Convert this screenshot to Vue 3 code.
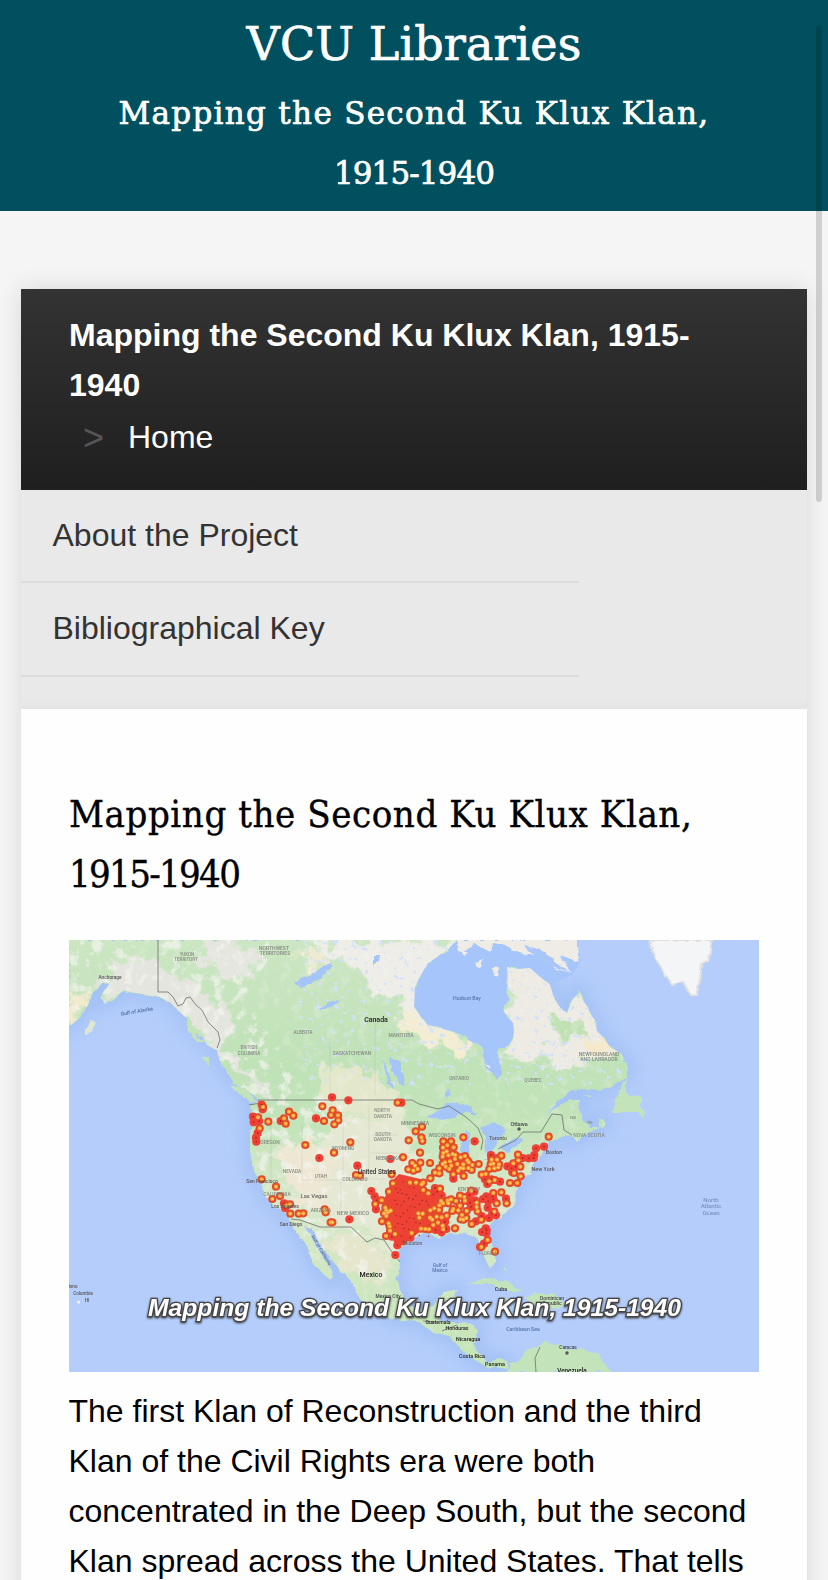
<script setup>
const place = (points, dx, dy) =>
  points.map(([x, y, hot]) => ({ x: x / 3 + dx, y: y / 3 + dy, hot: !!hot }))

// Chapter locations; a third value of 1 marks a solid red pin.
const pins = [
  ...place([
    [605, 524, 1], [608, 538, 1], [609, 531], [579, 560, 1], [594, 562], [581, 577, 1], [597, 574, 1], [599, 595], [593, 609, 1], [588, 623, 1], [589, 635, 1],
    [625, 575], [662, 573, 1], [672, 565], [677, 581], [687, 545], [700, 557]
  ], -9, -10),
  ...place([
    [96, 502, 1], [145, 511, 1], [293, 518], [304, 518, 1], [67, 529], [98, 541], [93, 555], [114, 556], [115, 571], [103, 583], [72, 573], [48, 565, 1],
    [16, 645], [151, 637], [366, 590], [347, 604], [364, 622], [367, 633], [326, 631], [490, 622], [524, 634, 1],
    [430, 634], [453, 634], [442, 646], [461, 652], [429, 653], [708, 655, 1]
  ], 231, -10),
  ...place([[26, 620], [12, 650, 1]], 471, -10),
  ...place([[605, 88], [648, 110], [660, 138], [637, 147], [672, 160, 1], [675, 174, 1], [690, 163], [679, 167], [691, 191], [716, 191]], -9, 210),
  ...place([
    [58, 24, 1], [102, 8], [172, 47, 1], [168, 75], [180, 77], [271, 27, 1], [309, 22], [360, 8], [10, 190], [74, 178], [77, 187], [92, 217], [97, 217], [148, 208, 1],
    [214, 123, 1], [224, 139, 1], [230, 151, 1], [226, 162], [228, 178, 1], [245, 151], [267, 125], [256, 173], [252, 190], [264, 187], [246, 214], [266, 220], [270, 242], [258, 258], [279, 100], [275, 73],
    [337, 39], [361, 38], [390, 39], [325, 58], [340, 62], [353, 57], [345, 47], [391, 85], [405, 68], [418, 55], [418, 70], [428, 42], [292, 286, 1], [286, 315, 1], [310, 274, 1], [331, 263, 1], [276, 260, 1],
    [430, 9], [445, 16], [458, 12], [465, 27], [450, 34], [435, 37], [472, 42], [482, 22], [495, 18], [502, 31], [490, 43], [505, 54], [490, 55], [475, 62], [460, 73], [460, 86, 1], [448, 57], [515, 60], [517, 45], [536, 42], [491, 78], [506, 37],
    [440, 4], [428, 20], [454, 47], [466, 15], [481, 54], [437, 50],
    [573, 15, 1], [604, 17], [575, 29], [591, 29], [572, 43], [583, 55], [568, 57], [595, 52], [545, 74], [557, 72], [555, 88, 1], [562, 102, 1], [574, 88, 1], [584, 90], [600, 95, 1], [568, 94], [597, 43], [580, 41],
    [654, 14], [668, 24, 1], [686, 25, 1], [703, 15, 1], [655, 31], [640, 40], [622, 49, 1], [635, 55, 1], [661, 50], [637, 67, 1], [642, 69], [662, 79], [630, 99], [652, 99], [647, 50, 1], [701, 24, 1],
    [514, 122], [523, 125, 1], [480, 137], [493, 141], [508, 135, 1], [495, 152], [510, 158, 1], [525, 151, 1], [513, 171, 1], [480, 167], [468, 153], [453, 148], [445, 160], [460, 177], [475, 181], [486, 195], [500, 183], [499, 204], [482, 208], [490, 209], [515, 222], [528, 214, 1], [544, 209], [533, 184], [530, 158], [545, 198, 1], [465, 235], [440, 197], [457, 183], [443, 152], [429, 160], [530, 171],
    [549, 147, 1], [559, 139, 1], [565, 154, 1], [578, 139, 1], [580, 129], [604, 127], [590, 160], [580, 148, 1], [563, 173, 1], [583, 185], [588, 196, 1], [567, 204, 1], [618, 146, 1], [620, 160], [577, 190, 1],
    [557, 235, 1], [546, 246, 1], [559, 250, 1], [563, 270], [552, 281, 1], [540, 291, 1], [544, 291], [585, 305], [560, 241, 1],
    [370, 98], [385, 130], [405, 114, 1], [412, 125, 1], [420, 116], [400, 133, 1], [425, 137, 1], [423, 153], [418, 166], [403, 175], [417, 180], [410, 200], [397, 209], [425, 202], [414, 218], [400, 225], [387, 238], [376, 237], [363, 236], [430, 238], [439, 237, 1], [425, 247, 1], [428, 227], [391, 181], [390, 203], [407, 240, 1], [435, 216, 1],
    [355, 190], [368, 191], [358, 203], [335, 249], [370, 120], [348, 98], [330, 98], [365, 103], [259, 198], [259, 181], [285, 252], [272, 182], [269, 229]
  ], 231, 210)
]

// Closely packed markers inside the southern cluster.
const packed = []
for (let r = 0; r < 10; r++) {
  for (let c = 0; c < 6; c++) {
    packed.push({ x: 325 + c * 6.3 + ((r * 7 + c * 3) % 5), y: 241 + r * 5.8 + ((c * 5 + r * 2) % 4) })
  }
}

const labels = [
  [41, 39, 'Anchorage', 4.8, '#555'], [118, 16, 'YUKON', 4.5], [117, 20.5, 'TERRITORY', 4.5],
  [205, 9.5, 'NORTHWEST', 5], [206, 14.5, 'TERRITORIES', 5], [180, 109, 'BRITISH', 4.5], [180, 114.5, 'COLUMBIA', 4.5],
  [234, 94, 'ALBERTA', 4.5], [283, 114.5, 'SASKATCHEWAN', 4.9], [332, 96.5, 'MANITOBA', 4.9], [390, 140, 'ONTARIO', 4.7], [464, 142, 'QUEBEC', 4.7],
  [307, 81.5, 'Canada', 7, '#222'], [398, 60, 'Hudson Bay', 5.2, '#5875ac'], [530, 116, 'NEWFOUNDLAND', 5.1], [530, 121.2, 'AND LABRADOR', 5.1],
  [504, 179, 'NB', 4.3], [521, 184, 'PE', 4.3], [520, 197, 'NOVA SCOTIA', 4.9], [450, 186, 'Ottawa', 5.4, '#444'], [429, 200, 'Toronto', 5.2, '#555'],
  [201, 203.5, 'OREGON', 4.9], [313, 172, 'NORTH', 4.7], [314, 177.5, 'DAKOTA', 4.7], [346, 184.5, 'MINNESOTA', 5], [314, 195.5, 'SOUTH', 4.7], [314, 200.5, 'DAKOTA', 4.7],
  [373, 196.5, 'WISCONSIN', 5], [274, 209.5, 'WYOMING', 4.8], [223, 233, 'NEVADA', 4.8], [252, 237.5, 'UTAH', 4.8], [286, 240.5, 'COLORADO', 4.9], [319, 220, 'NEBRASKA', 4.8],
  [308, 234, 'United States', 6.3, '#333'], [193, 243, 'San Francisco', 5, '#555'], [208, 256, 'CALIFORNIA', 4.8], [216, 268, 'Los Angeles', 5, '#555'], [245, 258, 'Las Vegas', 5.8, '#666'],
  [222, 286, 'San Diego', 5, '#555'], [252, 271.5, 'ARIZONA', 4.8], [284, 274.5, 'NEW MEXICO', 5.3], [344, 305, 'Houston', 4.8, '#666'], [302, 337, 'Mexico', 7, '#222'],
  [371, 327, 'Gulf of', 4.8, '#5875ac'], [371, 331.5, 'Mexico', 4.8, '#5875ac'], [419, 315, 'FLORIDA', 4.5], [432, 351, 'Cuba', 5.4, '#333'], [319, 358, 'Mexico City', 4.8, '#444'],
  [369, 384, 'Guatemala', 5.2, '#222'], [388, 390, 'Honduras', 5.3, '#222'], [399, 401, 'Nicaragua', 5.3, '#222'], [403, 417.5, 'Costa Rica', 5.4, '#222'], [426, 425.5, 'Panama', 5.4, '#222'],
  [454, 391, 'Caribbean Sea', 5.2, '#5875ac'], [483, 360, 'Dominican', 5, '#444'], [483, 365, 'Republic', 5, '#444'], [499, 409, 'Caracas', 4.8, '#444'], [503, 433, 'Venezuela', 6.4, '#222'],
  [485, 214, 'Boston', 5.2, '#555'], [474, 231, 'New York', 5.4, '#555'], [642, 261.5, 'North', 6, '#7a92be'], [642, 268, 'Atlantic', 6, '#7a92be'], [642, 274.5, 'Ocean', 6, '#7a92be'],
  [3, 348, 'Hono', 4.6, '#555'], [14, 354.5, 'Columbia', 4.6, '#555'], [18, 361.5, 'HI', 4.6, '#555'], [400, 251, 'KENTUCKY', 4.5]
]

const land =
  'M0 0H388L378 10 359 23 350 38 346 47 345 67 354 80 359 85 374 89 388 93 401 101 414 107 415 118 416 127 422 132 428 140 433 133 430 122 429 110 438 106 444 100 445 91 444 83 438 76 434 70 440 60 438 50 439 38 438 27 450 29 461 28 471 37 481 45 483 52 486 60 492 69 498 73 502 63 510 50 514 61 519 67 521 74 526 80 528 91 534 97 541 107 551 113 558 123 558 137 546 144 534 150 520 149 501 150 492 158 478 175 491 165 501 160 511 160 510 170 514 180 520 187 531 187 534 178 537 185 518 193 508 202 503 195 491 197 480 203 471 217 464 223 462 235 454 237 450 245 446 257 445 266 431 277 419 285 418 295 424 307 427 320 423 328 418 322 412 311 408 298 401 294 381 293 371 298 358 293 344 298 334 305 328 313 331 323 328 337 331 350 338 363 348 370 364 367 369 357 376 351 388 350 386 358 374 364 368 373 369 382 381 382 404 384 409 391 404 403 408 410 418 422 431 419 439 423 438 428 425 426 418 428 408 421 394 412 386 403 381 397 364 393 358 387 344 379 331 382 314 373 301 367 289 357 286 347 274 333 261 318 251 305 243 288 235 286 241 295 248 307 254 317 261 328 264 337 261 341 251 330 244 323 238 307 231 297 224 287 218 273 204 265 194 253 193 243 184 230 181 210 181 197 183 177 181 165 190 163 189 158 178 151 163 142 160 135 151 122 148 110 138 105 134 98 123 90 120 80 114 75 101 62 91 57 68 53 54 50 44 60 36 64 31 57 41 43 34 42 24 53 19 65 11 77 0 87Z'
</script>

<template>
  <div class="page">
    <header class="banner">
      <div class="library">VCU Libraries</div>
      <div class="collection">Mapping the Second Ku Klux Klan,<br /><span class="years">1915-1940</span></div>
    </header>
    <main class="sheet">
      <div class="crumbs">
        <strong>Mapping the Second Ku Klux Klan, 1915-<br />1940</strong>
        <div class="current"><span>&gt;</span>Home</div>
      </div>
      <nav>
        <a>About the Project</a>
        <a>Bibliographical Key</a>
      </nav>
      <article>
        <h1>Mapping the Second Ku Klux Klan,<br /><span class="years">1915-1940</span></h1>
        <svg class="map" viewBox="0 0 690 432" preserveAspectRatio="none" role="img">
          <defs>
            <linearGradient id="terrain" x1="0" y1="0" x2="0" y2="432" gradientUnits="userSpaceOnUse">
              <stop offset="0" stop-color="#cbe6c2" />
              <stop offset=".3" stop-color="#bfe2b7" />
              <stop offset=".44" stop-color="#c4e4ba" />
              <stop offset=".6" stop-color="#d9e8cb" />
              <stop offset="1" stop-color="#c3e5b5" />
            </linearGradient>
            <clipPath id="coast"><path :d="land" /></clipPath>
            <filter id="ragged" x="-20%" y="-20%" width="140%" height="140%">
              <feTurbulence type="fractalNoise" baseFrequency=".06" numOctaves="4" seed="8" result="n" />
              <feGaussianBlur in="SourceGraphic" stdDeviation="1.8" result="b" />
              <feDisplacementMap in="b" in2="n" scale="34" xChannelSelector="R" yChannelSelector="G" />
            </filter>
            <filter id="edge" x="-5%" y="-5%" width="110%" height="110%">
              <feTurbulence type="fractalNoise" baseFrequency=".12" numOctaves="3" seed="4" result="n" />
              <feDisplacementMap in="SourceGraphic" in2="n" scale="5" xChannelSelector="R" yChannelSelector="G" />
              <feGaussianBlur stdDeviation=".55" />
            </filter>
            <filter id="relief" x="0" y="0" width="100%" height="100%">
              <feTurbulence type="fractalNoise" baseFrequency=".09" numOctaves="4" seed="17" />
              <feColorMatrix values="0 0 0 0 .91  0 0 0 0 .91  0 0 0 0 .87  5 0 0 0 -2.6" />
              <feGaussianBlur stdDeviation=".5" />
            </filter>
            <filter id="lakes" x="0" y="0" width="100%" height="100%">
              <feTurbulence type="fractalNoise" baseFrequency=".17" numOctaves="2" seed="31" />
              <feColorMatrix values="0 0 0 0 .64  0 0 0 0 .75  0 0 0 0 .95  0 10 0 0 -6.4" />
            </filter>
            <filter id="glow" x="-10%" y="-10%" width="120%" height="120%"><feGaussianBlur stdDeviation="8" /></filter>
            <filter id="soft" x="-5%" y="-5%" width="110%" height="110%"><feGaussianBlur stdDeviation=".5" /></filter>
            <filter id="dark" x="-5%" y="-40%" width="110%" height="180%"><feGaussianBlur stdDeviation="1" /></filter>
            <clipPath id="mountains"><path d="M0 0H210L175 60 225 130 245 155 285 170 300 225 290 260 320 345 270 330 200 270 170 150 90 70H0Z" /></clipPath>
          </defs>
          <rect width="690" height="432" fill="#b4cdfb" />
          <path :d="land" fill="none" stroke="#a3c1f5" stroke-width="14" filter="url(#glow)" />
          <path d="M388 0H509L511 22 503 35 478 45 438 27 445 80 444 100 428 138 415 108 359 85 346 60 352 30Z" fill="#a6c5fa" />
          <g filter="url(#edge)">
            <path :d="land" fill="url(#terrain)" />
          </g>
          <g clip-path="url(#coast)">
            <g filter="url(#ragged)">
              <path d="M30 60L40 30 68 14 90 28 120 45 145 60 163 85 160 112 185 140 215 160 195 154 150 115 105 70 65 60Z" fill="#e5e5e0" />
              <path d="M125 0H185L195 28 165 40 140 28Z" fill="#e5e6df" />
              <path d="M235 0H400V75L380 94 350 85 328 62 308 60 293 32 265 20Z" fill="#efede8" />
              <path d="M438 15H490L500 70 512 45 550 110 525 122 490 128 475 116 455 125 428 112 444 88Z" fill="#edebe3" />
              <path d="M250 122L290 128 330 155 335 175H255Z" fill="#e4e8cb" />
              <path d="M255 178L335 175 350 205 345 290 320 315 290 285 250 288 255 240Z" fill="#e5e8d2" />
              <path d="M206 215L225 200 262 210 258 270 240 275 224 250Z" fill="#eee7d3" />
              <path d="M255 293L300 300 322 320 312 350 295 335 275 325Z" fill="#e6e6cc" />
              <path d="M0 50L18 58 10 90H0Z" fill="#f3ebce" />
              <path d="M230 8L255 12 262 30 240 30Z" fill="#efebd2" />
              <path d="M340 72L365 90 395 97 420 112 385 112 350 96 325 85Z" fill="#f3edd3" />
              <path d="M478 78L508 78 520 95 492 103Z" fill="#bfe1b1" />
              <path d="M512 98L530 95 545 112 520 112Z" fill="#f5e9ca" />
            </g>
            <g clip-path="url(#mountains)"><rect width="690" height="432" filter="url(#relief)" opacity=".6" /></g>
            <rect width="690" height="432" filter="url(#relief)" opacity=".22" />
            <rect x="230" width="330" height="145" filter="url(#lakes)" opacity=".9" />
          </g>
          <g fill="#a5c4f8" filter="url(#edge)">
            <path d="M225 42L240 36 262 22 264 25 252 38 240 44 231 47ZM248 70L263 60 272 61 256 70ZM304 15L311 15 310 22 304 24ZM321 117L331 123 336 147 331 145 322 128ZM313 118L318 128 325 149 319 143ZM359 178L380 162 402 166 408 175 397 172 380 179ZM412 188L425 182 437 190 431 197 421 216 415 211 417 197ZM397 190L391 209 393 222 399 218 402 194ZM430 206L447 198 455 200 437 213ZM415 220L431 212 425 220ZM375 154L380 149 382 154 378 158ZM246 220L251 215 250 223Z" />
          </g>
          <g filter="url(#edge)">
            <g fill="#eeece5">
              <path d="M388 0L390 10 397 17 405 4 414 8 421 12 423 3 436 5 450 13 471 17 487 29 503 33 491 16 510 22 509 0Z" />
              <path d="M406 24L415 20 410 29ZM424 28L429 27 429 36 425 35ZM415 124L422 126 420 128Z" />
              <path d="M581 0L584 12 588 20 592 28 599 38 603 45 614 42 621 54 627 56 631 40 633 23 640 18 644 0Z" fill="#f4f5f7" stroke="#e0e1df" stroke-width="2" />
            </g>
            <path d="M455 6L471 9 488 23 503 33 471 22ZM394 13L405 4 402 12Z" fill="#a8c6f8" />
            <g fill="#c3e3ba">
              <path d="M559 138L553 143 549 155 542 172 568 172 574 178 576 170 571 166 573 157 559 154 556 148ZM513 154L520 158 525 158ZM530 178L535 181 532 186 528 187ZM161 144L177 148 190 164 180 161 166 151ZM134 116L139 116 139 128 136 122ZM116 75L123 82 128 97 136 102 128 102 120 91Z" />
              <path d="M400 345L414 338 427 340 440 342 454 352 439 352 424 344 409 344ZM456 357L467 353 482 353 498 366 482 369 466 367ZM435 357L445 359 439 362ZM508 364L517 363 517 367 508 367Z" />
              <path d="M438 432L441 423 451 420 458 409 469 406 477 400 482 404 490 405 496 411 512 409 521 412 530 415 535 423 544 432Z" />
              <path d="M16 89L23 80 27 83 23 90 16 95Z" fill="#dfe6cd" />
              <path d="M7 361L12 359 10 364Z" fill="#f2f3ef" />
              <path d="M434 325L438 330 436 332Z" />
            </g>
          </g>
          <g fill="none" stroke="#777d75" stroke-width=".9" filter="url(#soft)">
            <path d="M89 0V52L99 52 104 57 109 66 114 64 117 58 121 57 127 65 133 70 139 82 149 92 151 100 148 108M180 165L192 163 189 160H343L350 164 369 169 380 166 397 177 409 188 414 200 412 210M429 209L447 200 454 192 472 192 483 174 493 175 495 190 503 195M222 279L231 280 251 287H282L298 302 306 298 315 300 325 315 331 322M354 381L366 382M373 391L388 385M467 432L466 418 471 407" />
            <path d="M261 95V157M306 155V80M202 184V240M233 184V240H272V275M274 182V235M300 165V230M303 195H330M302 213H341M273 239H321" opacity=".14" />
          </g>
          <g filter="url(#soft)">
            <path d="M322 242L330 234 343 237 355 240 356 252 369 246 376 257 373 272 380 280 373 294 352 291 339 301 327 307 321 292 315 281 314 262Z" fill="#ee4336" />
            <path d="M373 210L390 213 396 228 382 234 370 225ZM418 215L430 214 430 226 420 230Z" fill="#ea4a34" />
            <circle v-for="(p, i) in packed" :key="'d' + i" :cx="p.x" :cy="p.y" r=".8" fill="#b02620" />
            <circle v-for="(p, i) in pins" :key="'r' + i" :cx="p.x" :cy="p.y" r="4.1" :fill="p.hot ? '#ee4036' : '#e24c2c'" />
            <g v-for="(p, i) in pins" :key="'p' + i">
              <circle :cx="p.x" :cy="p.y" :r="p.hot ? 0.9 : 2.1" :fill="p.hot ? '#b8221e' : '#ffa93b'" />
              <circle v-if="!p.hot" :cx="p.x" :cy="p.y" r=".7" fill="#fff0a0" />
            </g>
          </g>
          <g class="labels" filter="url(#soft)">
            <text v-for="(l, i) in labels" :key="'l' + i" :x="l[0]" :y="l[1]" :font-size="l[3]" :fill="l[4] || '#858b82'">{{ l[2] }}</text>
            <text x="68" y="73" font-size="5.2" fill="#506c9e" transform="rotate(-10 68 73)">Gulf of Alaska</text>
            <text x="251" y="311" font-size="4.5" fill="#5c7295" transform="rotate(59 251 311)">Gulf of California</text>
            <circle cx="450" cy="189" r="1.7" fill="#555" /><circle cx="498" cy="413" r="1.7" fill="#555" />
          </g>
          <text class="caption" x="79" y="376" textLength="533">Mapping the Second Ku Klux Klan, 1915-1940</text>
        </svg>
        <p>The first Klan of Reconstruction and the third<br />Klan of the Civil Rights era were both<br />concentrated in the Deep South, but the second<br />Klan spread across the United States. That tells</p>
      </article>
    </main>
    <div class="scrollbar"></div>
  </div>
</template>

<style>
html, body { background: #f5f5f5; overflow: hidden; }
</style>

<style scoped>
.page { position: relative; width: 828px; height: 1580px; overflow: hidden; background: #f5f5f5; font: 32px/50px "Liberation Sans", Arial, sans-serif; color: #000; }
.banner { box-sizing: border-box; height: 211px; padding-top: 14px; background: #00505f; color: #fff; text-align: center; font-family: "DejaVu Serif", serif; -webkit-text-stroke: .7px #fff; }
.library { height: 69px; line-height: 60px; font-size: 46px; letter-spacing: .1px; }
.collection { font-size: 31px; line-height: 60px; letter-spacing: 1.3px; white-space: nowrap; }
.collection .years { letter-spacing: -.9px; }
.sheet { width: 786px; height: 1400px; margin: 78px 0 0 21px; background: #fefefe; box-shadow: 0 0 24px rgba(0, 0, 0, .12); }
.crumbs { box-sizing: border-box; height: 201px; padding: 21px 48px 0; color: #fff; background: linear-gradient(#333, #1f1f1f); white-space: nowrap; }
.crumbs strong { display: block; }
.current { padding: 2px 0 0 14px; }
.current span { display: inline-block; width: 45px; height: 50px; line-height: 52px; font-size: 36px; vertical-align: top; color: #555; }
nav { box-sizing: border-box; height: 219px; background: linear-gradient(#e9e9e9 95%, #e5e5e5); }
nav a { display: block; box-sizing: border-box; width: 558px; height: 94px; padding: 20px 31.5px 0; border-bottom: 2px solid #dcdcdc; color: #333; }
nav a:first-child { height: 93px; }
article { padding: 75px 48px 0; }
h1 { margin: 0; height: 156px; font: 38px/60px "DejaVu Serif Condensed", "DejaVu Serif", serif; font-stretch: condensed; letter-spacing: .55px; -webkit-text-stroke: .35px #000; white-space: nowrap; }
h1 .years { letter-spacing: -1.7px; }
.map { display: block; width: 690px; height: 432px; }
.labels text { text-anchor: middle; font-family: Roboto, sans-serif; font-weight: 500; }
.caption { font: italic bold 24.7px "Liberation Sans", Arial, sans-serif; fill: #fff; stroke: #444; stroke-width: 2.4px; paint-order: stroke; filter: drop-shadow(0 1px 1.2px #333); }
p { margin: 14px 0 0 -.5px; white-space: nowrap; }
.scrollbar { position: absolute; top: 25px; left: 816px; width: 6px; height: 477px; border-radius: 3px; background: rgba(0, 0, 0, .15); }
</style>
